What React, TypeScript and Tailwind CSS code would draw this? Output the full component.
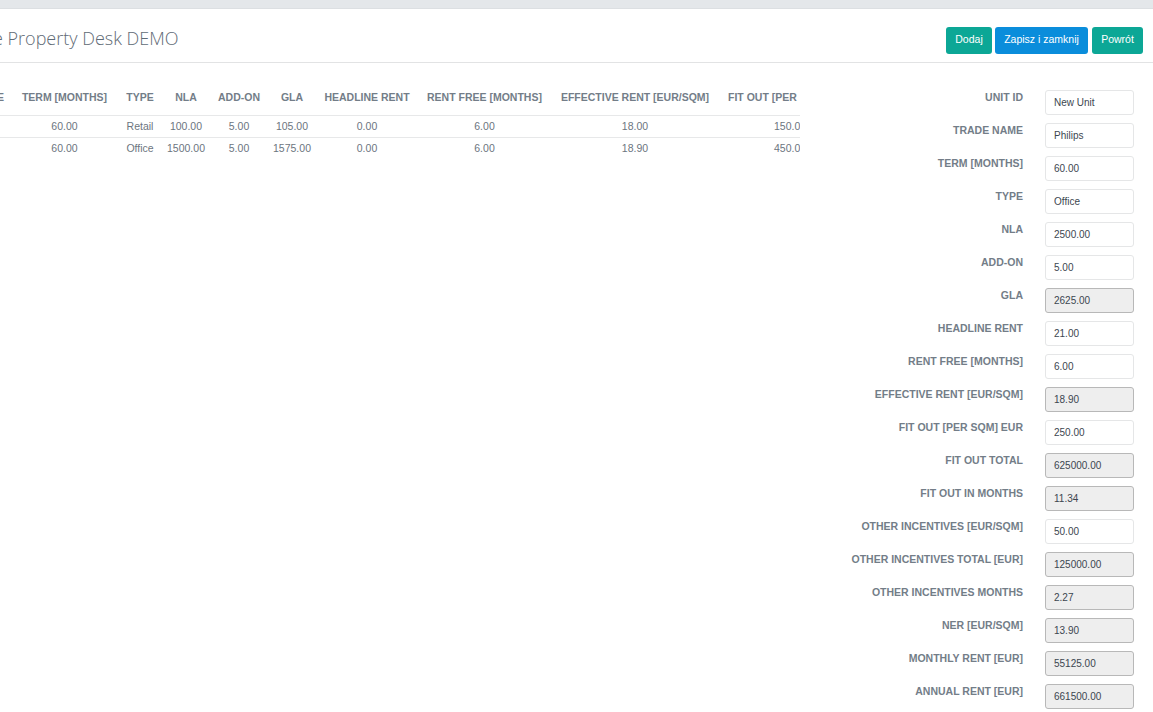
const cols = "grid grid-cols-[10px_109px_42px_50px_56px_50px_100px_135px_166px_82px]";

const headers = ["E", "TERM [MONTHS]", "TYPE", "NLA", "ADD-ON", "GLA", "HEADLINE RENT", "RENT FREE [MONTHS]", "EFFECTIVE RENT [EUR/SQM]"];
const rows = [
  ["60.00", "Retail", "100.00", "5.00", "105.00", "0.00", "6.00", "18.00", "150.00"],
  ["60.00", "Office", "1500.00", "5.00", "1575.00", "0.00", "6.00", "18.90", "450.00"],
];

const fields: [string, string, boolean][] = [
  ["UNIT ID", "New Unit", false],
  ["TRADE NAME", "Philips", false],
  ["TERM [MONTHS]", "60.00", false],
  ["TYPE", "Office", false],
  ["NLA", "2500.00", false],
  ["ADD-ON", "5.00", false],
  ["GLA", "2625.00", true],
  ["HEADLINE RENT", "21.00", false],
  ["RENT FREE [MONTHS]", "6.00", false],
  ["EFFECTIVE RENT [EUR/SQM]", "18.90", true],
  ["FIT OUT [PER SQM] EUR", "250.00", false],
  ["FIT OUT TOTAL", "625000.00", true],
  ["FIT OUT IN MONTHS", "11.34", true],
  ["OTHER INCENTIVES [EUR/SQM]", "50.00", false],
  ["OTHER INCENTIVES TOTAL [EUR]", "125000.00", true],
  ["OTHER INCENTIVES MONTHS", "2.27", true],
  ["NER [EUR/SQM]", "13.90", true],
  ["MONTHLY RENT [EUR]", "55125.00", true],
  ["ANNUAL RENT [EUR]", "661500.00", true],
];

export default function App() {
  return (
    <div className="h-screen overflow-hidden bg-white font-['Liberation_Sans',Arial,sans-serif]">
      <div className="h-[9px] bg-[#e4e7ea] border-b border-[#dcdfe2]" />
      <div className="h-[54px] flex items-center justify-between border-b border-[#e2e3e4] pr-[10px]">
        <h1 className="-ml-[7px] mt-[6px] whitespace-nowrap font-['Open_Sans',sans-serif] font-light text-[18px] text-[#5f6b76]">
          e Property Desk DEMO
        </h1>
        <div className="flex gap-[3px] mt-[9px] text-[10.5px] text-white">
          <button className="w-[46px] h-[27px] rounded-[3px] bg-[#0ca796]">Dodaj</button>
          <button className="w-[93px] h-[27px] rounded-[3px] bg-[#0a8ddb] mr-[1px]">Zapisz i zamknij</button>
          <button className="w-[51px] h-[27px] rounded-[3px] bg-[#0ca796]">Powrót</button>
        </div>
      </div>
      <div className="flex justify-between pr-[19px]">
        <div className="w-[800px] overflow-hidden pt-[27px] text-[10.5px]">
          <div className={`${cols} h-[26px] border-b border-[#e7e8e9] font-bold text-[#737d88] text-center whitespace-nowrap`}>
            {headers.map((h, i) => (
              <div key={h} className={i === 0 ? "text-left -ml-[3px]" : ""}>{h}</div>
            ))}
            <div className="text-left pl-[10px]">FIT OUT [PER</div>
          </div>
          {rows.map((r, ri) => (
            <div key={ri} className={`${cols} h-[22px] items-center text-[#6c7580] text-center whitespace-nowrap ${ri === 0 ? "border-b border-[#e7e8e9]" : ""}`}>
              <div />
              {r.map((c, i) => (
                <div key={i} className={i === 8 ? "text-left pl-[56px]" : ""}>{c}</div>
              ))}
            </div>
          ))}
        </div>
        <form className="pt-[27px] flex flex-col gap-[8px]">
          {fields.map(([label, value, ro]) => (
            <div key={label} className="flex justify-end gap-[22px] h-[25px]">
              <label className="text-[10.5px] font-bold text-[#737d88] whitespace-nowrap leading-[14px]">{label}</label>
              <input
                readOnly
                value={value}
                className={`w-[89px] h-[25px] rounded-[3px] border pl-[8px] text-[10px] text-[#3c4650] outline-none ${ro ? "bg-[#eeeeee] border-[#b8b8b8]" : "bg-white border-[#e5e6e7]"}`}
              />
            </div>
          ))}
        </form>
      </div>
    </div>
  );
}
